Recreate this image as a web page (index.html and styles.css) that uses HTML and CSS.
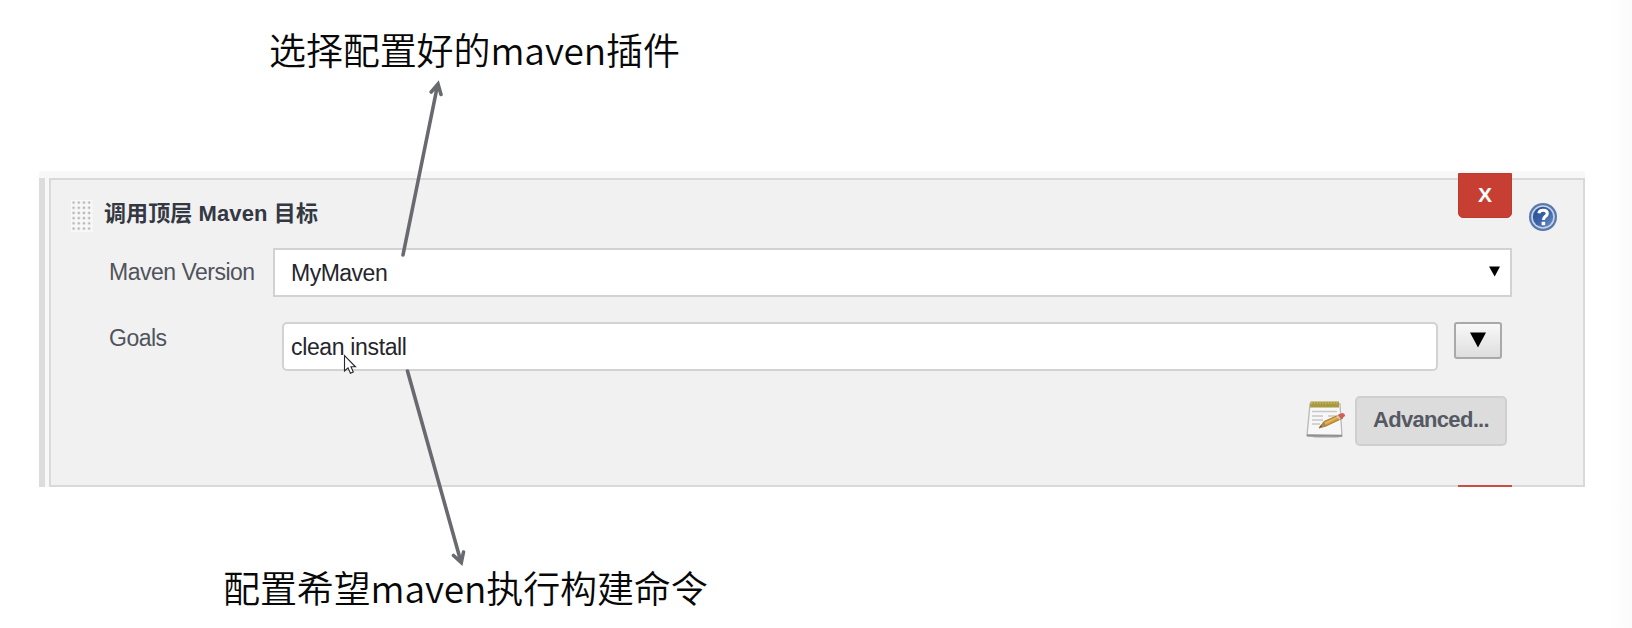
FILE: index.html
```html
<!DOCTYPE html>
<html lang="zh-CN">
<head>
<meta charset="utf-8">
<title>Maven</title>
<link rel="stylesheet" href="styles.css">
</head>
<body>
<main class="slide">
  <h1 class="note note-top">选择配置好的maven插件</h1>
  <section class="builder">
    <div class="rail"></div>
    <div class="panel">
      <header class="panel-head">
        <svg class="grip" width="22" height="32" viewBox="0 0 22 32">
          <defs><pattern id="dots" width="5.2" height="5.2" patternUnits="userSpaceOnUse"><rect x="1.4" y="1.4" width="2.3" height="2.3" fill="#b5b5b5"/></pattern></defs>
          <rect width="22" height="32" fill="#f8f8f8"/><rect x="1" y="1" width="20.8" height="31" fill="url(#dots)"/>
        </svg>
        <h2 class="title">调用顶层 Maven 目标</h2>
        <button class="delete">X</button>
        <svg class="help" width="28" height="28" viewBox="0 0 28 28">
          <defs><linearGradient id="blue" x1="0" y1="0" x2="1" y2="1"><stop offset="0" stop-color="#244d91"/><stop offset=".5" stop-color="#3b62a5"/><stop offset="1" stop-color="#6f94ca"/></linearGradient></defs>
          <circle cx="14" cy="14" r="14" fill="#5878ae"/><circle cx="14" cy="14" r="11.8" fill="#c6d4e9"/><circle cx="14" cy="14" r="10.2" fill="url(#blue)"/>
          <path d="M9.8 10.2C10.5 6.2 18.3 6.2 18.3 10.4C18.3 13.4 14.4 13.2 14.4 17" fill="none" stroke="#fff" stroke-width="3.1"/><rect x="12.6" y="18.8" width="3.6" height="3.4" rx=".6" fill="#fff"/>
        </svg>
      </header>
      <div class="row version-row">
        <label class="label">Maven Version</label>
        <div class="select"><span>MyMaven</span>
          <svg width="11" height="11" viewBox="0 0 11 11"><path d="M0 .5H11L5.7 10.5Z"/></svg>
        </div>
      </div>
      <div class="row goals-row">
        <label class="label">Goals</label>
        <div class="input">clean install</div>
        <button class="expand"><svg width="16" height="16" viewBox="0 0 16 16"><path d="M0 .5H16L8 15.5Z"/></svg></button>
      </div>
      <div class="actions">
        <svg class="notepad" width="40" height="38" viewBox="0 0 40 38">
          <path d="M4 34.5H35L33 37H8Z" fill="#d3d3d3"/>
          <path d="M4 3H34L36 35Q18 37 1 34.5Z" fill="#f7f7f7" stroke="#b9b9b9" stroke-width="1.3"/>
          <path d="M1 33.2L36 33.8V35.7L1 35.4Z" fill="#8f8f8f"/>
          <path d="M4.5 .5H33V6.5H4Z" fill="#a99a40"/><path d="M5 2H33" stroke="#c6ba62" stroke-width="1.6" stroke-dasharray="1.4 1.4"/>
          <path d="M6 10.5H31M6 15H17M22 15H30M6 19H17M6 23H14" stroke="#c8c8c8" stroke-width="1.3"/>
          <path d="M13 27L18 20.5L34 13.5L37 17L20 25Z" fill="#d19a3c" stroke="#a87a35"/>
          <path d="M19 22.5L34 15" stroke="#e7b958" stroke-width="1.5"/><path d="M13 27L18 20.5L20 25Z" fill="#a98a55"/><path d="M13 27L16 25.5L15 24.2Z" fill="#555"/>
          <path d="M32 14L36 12Q39 12 39 15L35 18Z" fill="#cf5f58"/><path d="M31 14.5L34 18.2" stroke="#ccc" stroke-width="1.6"/>
        </svg>
        <button class="advanced">Advanced...</button>
      </div>
      <div class="next-delete"></div>
    </div>
  </section>
  <p class="note note-bottom">配置希望maven执行构建命令</p>
  <svg class="overlay" width="1632" height="628" viewBox="0 0 1632 628">
    <g fill="none" stroke="#696a6f" stroke-width="3.6" stroke-linecap="round">
      <path d="M403 255L437.6 85M431.2 92L438 84L441 94.5"/>
      <path d="M407.5 371L461 562M453.5 555.5L461.3 562.5L463.5 552"/>
    </g>
    <path d="M344.5 355.5V371L348 367.8L350.4 373.2L353.3 371.9L351 366.8H355.5Z" fill="#fff" stroke="#26262c" stroke-width="1.1"/>
  </svg>
</main>
</body>
</html>
```
FILE: styles.css
```css
* { box-sizing: border-box; }
body { margin: 0; background: #fff; }
.slide { position: relative; width: 1632px; height: 628px; overflow: hidden; background: linear-gradient(90deg, #fff 1605px, #fbfbfb 1632px); font-family: "Liberation Sans", "Noto Sans CJK SC", sans-serif; }
.note { margin: 0; color: #080808; font-family: "Noto Sans CJK SC DemiLight", "Noto Sans CJK SC", sans-serif; font-weight: 350; white-space: nowrap; }
.note-top { height: 171px; padding: 21px 0 0 269px; font-size: 37px; line-height: 56px; letter-spacing: -.1px; }
.builder { display: flex; gap: 4px; width: 1546px; height: 316px; margin-left: 39px; padding-top: 7px; background: #f8f8f8; }
.rail { width: 6px; background: #dcdcdc; }
.panel { width: 1536px; height: 309px; border: 2px solid #d9d9d9; background: #f1f1f1; }
.panel-head { display: flex; align-items: flex-start; height: 68px; padding-left: 20px; }
.grip { flex: none; margin-top: 20px; }
.title { flex: none; width: 1354px; margin: 18px 0 0 11px; color: #333842; font: bold 22px/32px "Liberation Sans", "Noto Sans CJK SC", sans-serif; letter-spacing: .1px; }
.delete { flex: none; width: 54px; height: 45px; margin: -7px 0 0; padding: 0 0 2px; border: 1px solid #bd3a2f; border-radius: 0 0 5px 5px; background: #c63f32; color: #fff; font: bold 21px "Liberation Sans", sans-serif; }
.help { flex: none; margin: 23px 0 0 17px; }
.row { display: flex; align-items: flex-start; padding-left: 58px; color: #50535b; font-size: 23px; letter-spacing: -.5px; }
.label { line-height: 28px; white-space: nowrap; }
.version-row { height: 75px; }
.version-row .label { width: 164px; padding-top: 10px; }
.select { display: flex; align-items: center; justify-content: space-between; width: 1239px; height: 49px; padding: 2px 10px 0 16px; border: 2px solid #d2d2d2; background: #fff; color: #25252d; }
.select svg { margin-top: -5px; }
.goals-row { height: 74px; }
.goals-row .label { width: 173px; padding-top: 1px; }
.input { width: 1156px; height: 49px; margin-top: -1px; padding-left: 7px; border: 2px solid #d2d2d2; border-radius: 5px; background: #fff; color: #25252d; line-height: 46px; letter-spacing: -.35px; }
.expand { display: grid; place-items: center; width: 48px; height: 37px; margin: -1px 0 0 16px; padding: 0 0 2px; border: 2px solid #a9a9a9; border-radius: 3px; background: linear-gradient(#f8f8f8, #dedede); }
.actions { display: flex; justify-content: flex-end; gap: 9px; height: 88px; padding-right: 76px; }
.notepad { margin-top: 4px; }
.advanced { width: 152px; height: 50px; margin-top: -1px; padding: 0 0 3px; border: 2px solid #cfcfcf; border-radius: 5px; background: #dcdcdc; color: #555963; font: bold 22px "Liberation Sans", sans-serif; letter-spacing: -.7px; }
.next-delete { width: 54px; height: 2px; margin-left: 1407px; background: #c94d42; }
.note-bottom { padding: 72px 0 0 223px; font-size: 37px; line-height: 56px; letter-spacing: -.1px; }
.overlay { position: absolute; top: 0; left: 0; }
```
